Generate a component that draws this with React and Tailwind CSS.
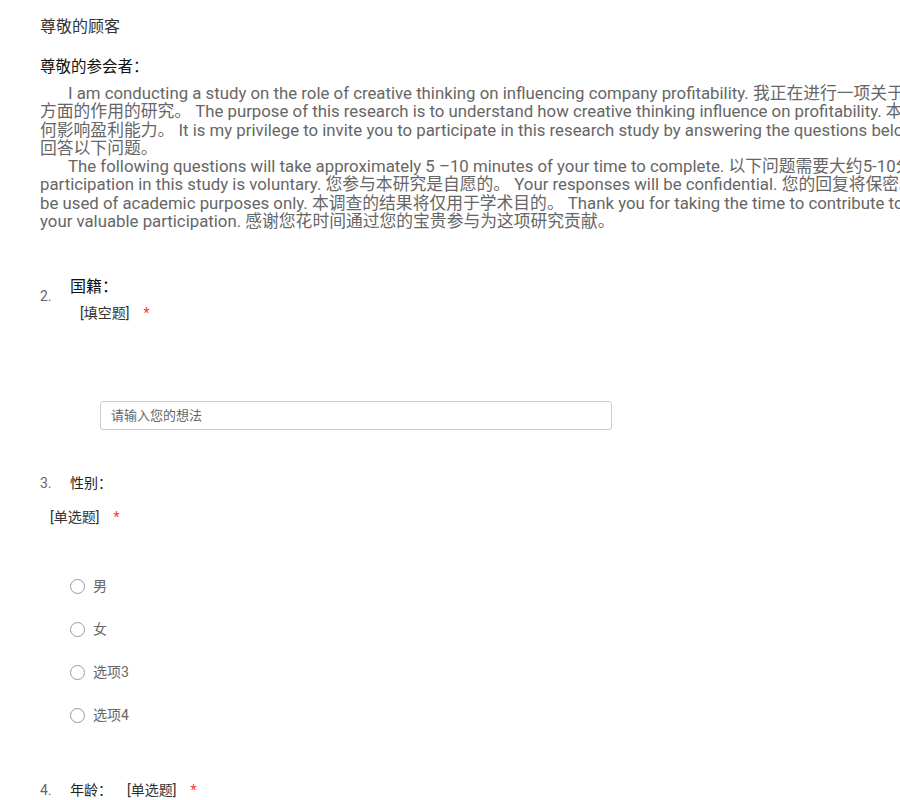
import React from 'react';

const FONT = { fontFamily: 'Roboto, "Noto Sans CJK SC", sans-serif' };

const para1 = [
  'I am conducting a study on the role of creative thinking on influencing company profitability. 我正在进行一项关于创造性思维在影响公司盈利能力',
  '方面的作用的研究。 The purpose of this research is to understand how creative thinking influence on profitability. 本研究的目的是了解创造性思维如',
  '何影响盈利能力。 It is my privilege to invite you to participate in this research study by answering the questions below. 我很荣幸邀请您参与本研究，',
  '回答以下问题。',
];
const para2 = [
  'The following questions will take approximately 5 –10 minutes of your time to complete. 以下问题需要大约5-10分钟的时间完成。 Your',
  'participation in this study is voluntary. 您参与本研究是自愿的。 Your responses will be confidential. 您的回复将保密。 The results of this survey will',
  'be used of academic purposes only. 本调查的结果将仅用于学术目的。 Thank you for taking the time to contribute to this research study through',
  'your valuable participation. 感谢您花时间通过您的宝贵参与为这项研究贡献。',
];

const Lines = ({ lines }) => (
  <div>
    {lines.map((l, i) => (
      <div key={i} className={`whitespace-nowrap ${i === 0 ? 'pl-[28px]' : ''}`}>{l}</div>
    ))}
  </div>
);

const Radio = ({ label }) => (
  <label className="flex items-center gap-[8px] h-[16px]">
    <span className="w-[15px] h-[15px] rounded-full border border-[#999] bg-white" />
    <span className="text-[14px] text-[#666]">{label}</span>
  </label>
);

export default function App() {
  return (
    <div className="w-[900px] h-[800px] overflow-hidden bg-white" style={FONT}>
      <div className="pl-[40px] pt-[17px]">
        <p className="text-[16px] leading-[20px] text-[#333]">尊敬的顾客</p>
        <p className="mt-[20px] text-[15.5px] leading-[20px] text-[#111]">尊敬的参会者：</p>
        <div className="mt-[7px] text-[16.8px] leading-[18.3px] text-[#666]">
          <Lines lines={para1} />
          <Lines lines={para2} />
        </div>

        {/* Q2 */}
        <div className="mt-[48px] flex">
          <span className="w-[30px] pt-[9px] text-[14px] leading-[18px] text-[#666]">2.</span>
          <div>
            <p className="text-[16px] leading-[18px] text-[#111]">国籍：</p>
            <p className="mt-[8px] ml-[10px] text-[14px] leading-[18px] text-[#333]">
              [填空题]<span className="ml-[14px] text-[#f33]">*</span>
            </p>
          </div>
        </div>
        <div className="mt-[79px] ml-[60px] w-[512px] h-[29px] border border-[#ccc] rounded-[3px] flex items-center px-[10px]">
          <span className="text-[13px] text-[#666]">请输入您的想法</span>
        </div>

        {/* Q3 */}
        <div className="mt-[44px] flex items-center text-[14px] leading-[18px]">
          <span className="w-[30px] text-[#666]">3.</span>
          <span className="text-[#222]">性别：</span>
        </div>
        <p className="mt-[16px] ml-[10px] text-[14px] leading-[18px] text-[#333]">
          [单选题]<span className="ml-[14px] text-[#f33]">*</span>
        </p>
        <div className="mt-[52px] ml-[30px] flex flex-col gap-[27px]">
          <Radio label="男" />
          <Radio label="女" />
          <Radio label="选项3" />
          <Radio label="选项4" />
        </div>

        {/* Q4 */}
        <div className="mt-[58px] flex items-center text-[14px] leading-[18px]">
          <span className="w-[30px] text-[#666]">4.</span>
          <span className="text-[#222]">年龄：</span>
          <span className="ml-[15px] text-[#333]">[单选题]</span>
          <span className="ml-[14px] text-[#f33]">*</span>
        </div>
      </div>
    </div>
  );
}
